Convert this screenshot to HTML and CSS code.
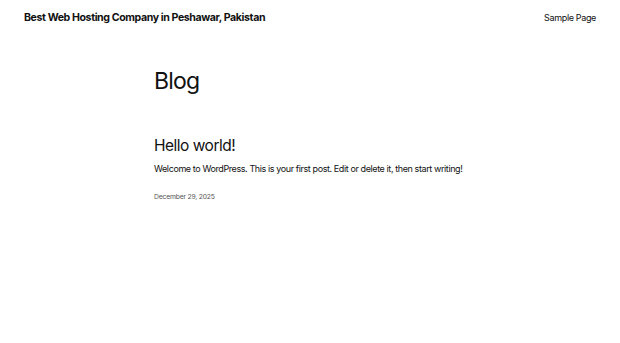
FILE: index.html
```html
<!DOCTYPE html>
<html>
<head>
	<meta charset="UTF-8">
	<title>Blog</title>
	<link rel="stylesheet" href="styles.css">
</head>
<body>
	<header class="hdr">
		<a class="site-ttl" href="#">Best Web Hosting Company in Peshawar, Pakistan</a>
		<nav class="nav"><a href="#">Sample Page</a></nav>
	</header>
	<main class="main">
		<h1 class="page-ttl">Blog</h1>
		<article class="post">
			<h2 class="post-ttl"><a href="#">Hello world!</a></h2>
			<p class="post-txt">Welcome to WordPress. This is your first post. Edit or delete it, then start writing!</p>
			<div class="post-date">December 29, 2025</div>
		</article>
	</main>
</body>
</html>
```

FILE: styles.css
```css
body { margin: 0; background: #FFF; color: #111; font-family: Inter, "Liberation Sans", sans-serif; }
a { color: inherit; text-decoration: none; }
.hdr { display: flex; justify-content: space-between; align-items: center; padding: 10px 24px 0 24px; height: 15px; }
.site-ttl { font-size: 10.6px; font-weight: 700; letter-spacing: -0.4px; }
.nav { font-size: 9px; letter-spacing: -0.35px; }
.main { width: 312px; margin: 0 auto; padding-top: 43px; }
.page-ttl { margin: 0; font-size: 23px; font-weight: 400; letter-spacing: -0.8px; line-height: 1.2; }
.post { margin-top: 41px; }
.post-ttl { margin: 0; font-size: 15.5px; font-weight: 400; letter-spacing: -0.5px; line-height: 1.2; }
.post-txt { margin: 8px 0 0 0; font-size: 9px; letter-spacing: -0.4px; line-height: 1.4; white-space: nowrap; }
.post-date { margin-top: 16px; font-size: 6.8px; color: #555; letter-spacing: -0.2px; }
```
